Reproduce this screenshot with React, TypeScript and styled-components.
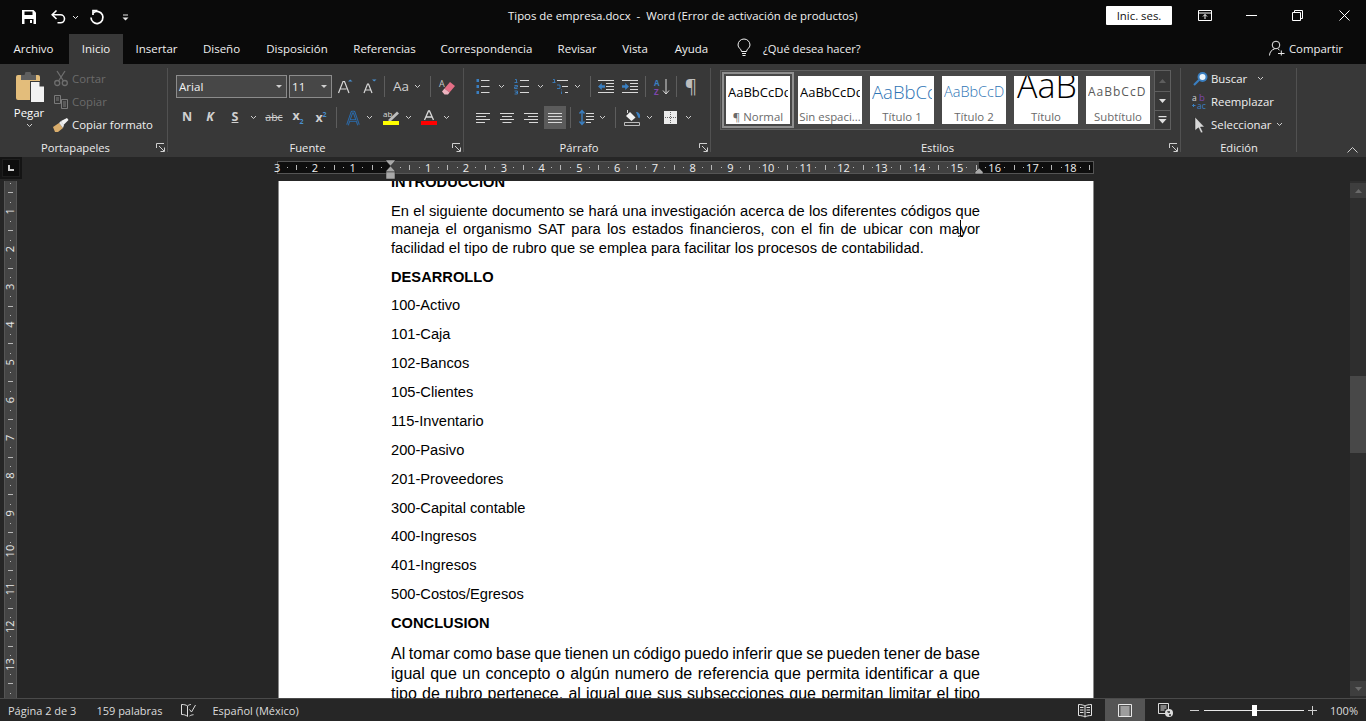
import React from 'react';
import styled, { createGlobalStyle } from 'styled-components';

const UI_FONT = '"Open Sans", "Noto Sans", sans-serif';

const GlobalStyle = createGlobalStyle`
    html, body {
        margin: 0;
        padding: 0;
        height: 721px;
        overflow: hidden;
        background: #262626;
    }
    svg {
        display: block;
        overflow: visible;
    }
`;

const Window = styled.div`
    width: 1366px;
    height: 721px;
    display: flex;
    flex-direction: column;
    font-family: ${ UI_FONT };
    font-size: 11.5px;
    color: #fff;
    overflow: hidden;
`;

/* ---------- title bar ---------- */

const TitleBar = styled.div`
    height: 34px;
    flex: none;
    display: flex;
    align-items: center;
    background: #0a0a0a;
    position: relative;
`;

const Qat = styled.div`
    display: flex;
    align-items: center;
    padding-left: 22px;
`;

const Title = styled.div`
    position: absolute;
    left: 508px;
    top: 7px;
    font-size: 11.4px;
    line-height: 18px;
    white-space: pre;
    color: #f2f2f2;
`;

const SignIn = styled.div`
    margin-left: auto;
    width: 66px;
    height: 19px;
    margin-top: -3px;
    background: #fff;
    border-radius: 1px;
    color: #111;
    display: flex;
    align-items: center;
    justify-content: center;
    font-size: 11.4px;
`;

const WinControls = styled.div`
    display: flex;
    align-items: center;
    margin-top: -3px;
    width: 194px;
`;

/* ---------- tabs ---------- */

const TabBar = styled.div`
    height: 30px;
    flex: none;
    display: flex;
    align-items: stretch;
    background: #0a0a0a;
`;

const Tab = styled.div<{ $w: number; $active?: boolean; $ml?: number }>`
    width: ${ p => p.$w }px;
    margin-left: ${ p => p.$ml || 0 }px;
    padding-bottom: 2px;
    box-sizing: border-box;
    display: flex;
    align-items: center;
    justify-content: center;
    font-size: 11.5px;
    color: #f0f0f0;
    background: ${ p => p.$active ? '#383838' : 'transparent' };
    white-space: nowrap;
`;

const TellMe = styled.div`
    display: flex;
    align-items: center;
    gap: 12px;
    margin-left: 15px;
    padding-bottom: 2px;
    font-size: 11.2px;
    color: #f0f0f0;
`;

const Share = styled.div`
    margin-left: auto;
    margin-right: 23px;
    padding-bottom: 2px;
    display: flex;
    align-items: center;
    gap: 4px;
    font-size: 11.4px;
    color: #f0f0f0;
`;

/* ---------- ribbon ---------- */

const Ribbon = styled.div`
    height: 93px;
    flex: none;
    display: flex;
    background: #383838;
    padding-top: 4px;
    box-sizing: border-box;
`;

const Group = styled.div<{ $w: number }>`
    width: ${ p => p.$w }px;
    flex: none;
    box-sizing: border-box;
    height: 89px;
    display: flex;
    flex-direction: column;
    position: relative;

    &::after {
        content: '';
        position: absolute;
        right: 0;
        top: 0;
        width: 1px;
        height: 84px;
        background: #515151;
    }
`;

const GroupBody = styled.div`
    flex: 1;
    min-height: 0;
`;

const GroupLabel = styled.div<{ $launcher?: boolean }>`
    height: 19px;
    flex: none;
    display: flex;
    align-items: center;
    justify-content: center;
    box-sizing: border-box;
    padding-right: ${ p => p.$launcher ? 17 : 0 }px;
    font-size: 11.2px;
    color: #ececec;
`;

const Launcher = styled.div`
    position: absolute;
    right: 3px;
    bottom: 5px;
`;

const ClipboardBody = styled.div`
    display: flex;
    height: 100%;
`;

const PasteBtn = styled.div`
    width: 50px;
    flex: none;
    padding: 4px 0 0 8px;
    box-sizing: border-box;
    display: flex;
    flex-direction: column;
    align-items: center;
    font-size: 11.4px;
`;

const PasteIconWrap = styled.div`
    margin-left: 3px;
`;

const PasteLabel = styled.div`
    margin-top: 1px;
    line-height: 17px;
    margin-bottom: 2px;
`;

const SideColumn = styled.div<{ $pl: number }>`
    display: flex;
    flex-direction: column;
    margin-top: -1px;
    padding-left: ${ p => p.$pl }px;
`;

const SideItem = styled.div<{ $disabled?: boolean }>`
    height: 23px;
    flex: none;
    display: flex;
    align-items: center;
    gap: 4px;
    white-space: nowrap;
    font-size: 11.4px;
    color: ${ p => p.$disabled ? '#6b6b6b' : '#efefef' };
`;

const SideIcon = styled.div`
    width: 14px;
    display: flex;
    justify-content: center;
`;

const Rows = styled.div`
    display: flex;
    flex-direction: column;
    padding: 7px 0 0 8px;
    gap: 8px;
`;

const Row = styled.div`
    display: flex;
    align-items: center;
    height: 23px;
`;

const Cell = styled.div<{ $w: number; $ml?: number; $active?: boolean }>`
    width: ${ p => p.$w }px;
    height: 23px;
    flex: none;
    margin-left: ${ p => p.$ml || 0 }px;
    display: flex;
    align-items: center;
    justify-content: center;
    background: ${ p => p.$active ? '#5b5b5b' : 'transparent' };
`;

const Sep = styled.div<{ $ml?: number }>`
    width: 1px;
    height: 21px;
    flex: none;
    margin-left: ${ p => p.$ml || 0 }px;
    background: #5d5d5d;
`;

const FontBox = styled.div<{ $w: number; $ml?: number }>`
    width: ${ p => p.$w }px;
    height: 23px;
    margin-left: ${ p => p.$ml || 0 }px;
    flex: none;
    box-sizing: border-box;
    border: 1px solid #8c8c8c;
    background: #474747;
    display: flex;
    align-items: center;
    justify-content: space-between;
    padding: 0 4px 0 2px;
    font-size: 11.6px;
    color: #f2f2f2;
`;

const GlyphText = styled.span<{ $size: number; $bold?: boolean; $italic?: boolean; $color?: string; $under?: boolean; $strike?: boolean }>`
    font-size: ${ p => p.$size }px;
    font-weight: ${ p => p.$bold ? 700 : 400 };
    font-style: ${ p => p.$italic ? 'italic' : 'normal' };
    color: ${ p => p.$color || '#d0d0d0' };
    text-decoration: ${ p => p.$under ? 'underline' : p.$strike ? 'line-through' : 'none' };
    line-height: 1;
`;

const Sub = styled.sub`
    font-size: 7px;
    color: #4a90d0;
`;

const Sup = styled.sup`
    font-size: 7px;
    color: #4a90d0;
`;

/* ---------- style gallery ---------- */

const Gallery = styled.div`
    margin: 2px 0 0 9px;
    width: 451px;
    height: 60px;
    box-sizing: border-box;
    border: 1px solid #5f5f5f;
    background: #484848;
    display: flex;
`;

const Cards = styled.div`
    flex: 1;
    display: flex;
    gap: 8px;
    padding: 5px 0 0 5px;
`;

const Card = styled.div<{ $selected?: boolean }>`
    width: 64px;
    height: 48px;
    background: #fff;
    flex: none;
    display: flex;
    flex-direction: column;
    outline: ${ p => p.$selected ? '2px solid #8f8f8f' : 'none' };
    outline-offset: 2px;
    overflow: hidden;
`;

const Preview = styled.div<{ $size: number; $color: string; $weight?: number; $spacing?: number; $lift?: number; $inset?: number }>`
    height: 33px;
    flex: none;
    margin: 0 2px;
    overflow: hidden;
    white-space: nowrap;
    font-family: "Open Sans", "Noto Sans", sans-serif;
    font-size: ${ p => p.$size }px;
    font-weight: ${ p => p.$weight || 400 };
    line-height: ${ p => 32 - (p.$lift || 0) * 2 }px;
    color: ${ p => p.$color };
    letter-spacing: ${ p => p.$spacing || 0 }px;
    text-indent: ${ p => p.$inset || 0 }px;
`;

const CardLabel = styled.div`
    text-align: center;
    color: #6a6a6a;
    font-size: 11.4px;
    line-height: 15px;
    white-space: nowrap;
    overflow: hidden;
`;

const GalleryScroll = styled.div`
    width: 15px;
    flex: none;
    border-left: 1px solid #5f5f5f;
    background: #383838;
    display: flex;
    flex-direction: column;
`;

const ScrollCell = styled.div<{ $h: number; $border?: boolean }>`
    height: ${ p => p.$h }px;
    display: flex;
    align-items: center;
    justify-content: center;
    box-sizing: border-box;
    border-bottom: ${ p => p.$border ? '1px solid #5f5f5f' : 'none' };
`;

const Collapse = styled.div`
    flex: 1;
    display: flex;
    align-items: flex-end;
    justify-content: flex-end;
    padding: 0 8px 4px 0;
`;

/* ---------- ruler row ---------- */

const RulerRow = styled.div`
    height: 24px;
    flex: none;
    display: flex;
    background: #262626;
`;

const TabStop = styled.div`
    width: 22px;
    height: 22px;
    background: #0d0d0d;
    box-shadow: inset 0 0 0 2px #141414, inset 0 0 0 3px #1e1e1e;
    display: flex;
    align-items: center;
    justify-content: center;
`;

const HRulerWrap = styled.div`
    margin-left: 255px;
`;

/* ---------- document area ---------- */

const Work = styled.div`
    flex: 1;
    min-height: 0;
    display: flex;
    background: #262626;
`;

const VRulerWrap = styled.div`
    width: 278px;
    flex: none;
    padding-left: 4px;
    box-sizing: border-box;
`;

const Page = styled.div`
    width: 816px;
    flex: none;
    box-sizing: border-box;
    background: #fff;
    border-left: 1px solid #8a8a8a;
    border-right: 1px solid #8a8a8a;
    padding-left: 112px;
    overflow: hidden;
    position: relative;
    font-family: "Liberation Sans", Arial, sans-serif;
    color: #000;
`;

const Heading = styled.div<{ $top?: number; $mb: number }>`
    font-size: 14.67px;
    font-weight: 700;
    line-height: 18px;
    margin-top: ${ p => p.$top || 0 }px;
    margin-bottom: ${ p => p.$mb }px;
`;

const Justified = styled.div<{ $size?: number; $lh?: number; $ws?: number }>`
    width: 589px;
    font-size: ${ p => p.$size || 14.67 }px;
    line-height: ${ p => p.$lh || 18.4 }px;
    word-spacing: ${ p => p.$ws || 0 }px;
    white-space: nowrap;
    text-align: justify;
    text-align-last: justify;
`;

const LastLine = styled.div`
    font-size: 14.67px;
    line-height: 18.5px;
    margin-bottom: 10.2px;
`;

const AccountItem = styled.div`
    font-size: 14.67px;
    line-height: 18px;
    margin-bottom: 10.9px;
`;

const IBeam = styled.div`
    position: absolute;
    left: 678px;
    top: 39px;
`;

const Scrollbar = styled.div`
    width: 16px;
    margin-left: auto;
    flex: none;
    background: #2e2e2e;
    display: flex;
    flex-direction: column;
    padding-top: 2px;
    box-sizing: border-box;
`;

const ScrollBtn = styled.div<{ $mt?: number }>`
    height: 15px;
    margin-top: ${ p => p.$mt || 0 }px;
    background: #3e3e3e;
    display: flex;
    align-items: center;
    justify-content: center;
    flex: none;
`;

const Thumb = styled.div`
    height: 77px;
    margin-top: 178px;
    background: #484848;
    flex: none;
`;

/* ---------- status bar ---------- */

const StatusBar = styled.div`
    height: 23px;
    flex: none;
    box-sizing: border-box;
    border-top: 1px solid #4a4a4a;
    background: #262626;
    display: flex;
    align-items: center;
    color: #dcdcdc;
    font-size: 11px;
`;

const StatusText = styled.div<{ $ml: number; $mr?: number }>`
    margin-left: ${ p => p.$ml }px;
    margin-right: ${ p => p.$mr || 0 }px;
    white-space: nowrap;
`;

const StatusIcon = styled.div<{ $ml?: number; $w?: number; $active?: boolean }>`
    margin-left: ${ p => p.$ml || 0 }px;
    width: ${ p => p.$w || 16 }px;
    height: 22px;
    display: flex;
    align-items: center;
    justify-content: center;
    background: ${ p => p.$active ? '#555' : 'transparent' };
`;

const StatusLeft = styled.div`
    display: flex;
    align-items: center;
`;

const StatusRight = styled.div`
    margin-left: auto;
    display: flex;
    align-items: center;
`;

const Slider = styled.div`
    width: 100px;
    height: 1px;
    margin-left: 5px;
    background: #e8e8e8;
    position: relative;
`;

const SliderThumb = styled.div`
    position: absolute;
    left: 48px;
    top: -5px;
    width: 5px;
    height: 11px;
    background: #fff;
`;

/* ---------- icons ---------- */

const Chevron = ({ color = '#cfcfcf' }: { color?: string }) => (
    <svg width="7" height="5" viewBox="0 0 7 5"><path d="M1 1l2.5 2.5L6 1" fill="none" stroke={ color } strokeWidth="1" /></svg>
);

const SaveIcon = () => (
    <svg width="14" height="14" viewBox="0 0 14 14">
        <path d="M0 0h11.500L14 2.500V14H0z" fill="#fff" />
        <path d="M2.500 1.500h8v3.500h-8zM2.500 9h9v5h-9z" fill="#0a0a0a" />
        <path d="M8 10h2v3H8z" fill="#fff" />
    </svg>
);

const UndoIcon = () => (
    <svg width="15" height="14" viewBox="0 0 15 14" fill="none" stroke="#fff" strokeWidth="1.600">
        <path d="M5.500 .5L1.200 4.800 5.500 9" />
        <path d="M1.800 4.800h7.700a3.900 3.900 0 0 1 0 8H6.500" />
    </svg>
);

const RedoIcon = () => (
    <svg width="14" height="14" viewBox="0 0 14 14" fill="none" stroke="#fff" strokeWidth="1.700">
        <path d="M3.300 2.800A6 6 0 1 1 1 7.500" />
        <path d="M7.500 .5H3v4.500" />
    </svg>
);

const CustomizeIcon = () => (
    <svg width="7" height="7" viewBox="0 0 7 7"><path d="M1 .5h5V1.500H1zM.5 3.500h6L3.500 6.500z" fill="#e6e6e6" /></svg>
);

const RibbonModeIcon = () => (
    <svg width="14" height="11" viewBox="0 0 14 11" fill="none" stroke="#fff">
        <path d="M.5 .5h13v10H.5zM.5 3h13" />
        <path d="M7 9V4.500M5 6.500l2-2 2 2" />
    </svg>
);

const MinIcon = () => (
    <svg width="11" height="1" viewBox="0 0 11 1"><path d="M0 .5h11" stroke="#fff" /></svg>
);

const RestoreIcon = () => (
    <svg width="11" height="11" viewBox="0 0 11 11" fill="none" stroke="#fff">
        <path d="M.5 2.500h8v8h-8zM2.500 2.500v-2h8v8h-2" />
    </svg>
);

const CloseIcon = () => (
    <svg width="11" height="11" viewBox="0 0 11 11"><path d="M.5 .5l10 10M10.500 .5l-10 10" stroke="#fff" /></svg>
);

const BulbIcon = () => (
    <svg width="14" height="18" viewBox="0 0 14 18" fill="none" stroke="#f0f0f0">
        <path d="M4.500 12.500C4.500 10 1 9 1 6a6 6 0 0 1 12 0c0 3-3.500 4-3.500 6.500z" />
        <path d="M5 14.500h4M5.500 16.500h3" />
    </svg>
);

const PersonIcon = () => (
    <svg width="16" height="16" viewBox="0 0 16 16" fill="none" stroke="#e8e8e8">
        <circle cx="7" cy="5" r="3.800" />
        <path d="M.5 15.500c0-3.500 2.500-6 5-6.500M9 9.300c.6.2 1 .4 1.500.8M9 13.500h6.500M12.300 10.500v5" />
    </svg>
);

const LauncherIcon = () => (
    <svg width="9" height="9" viewBox="0 0 9 9" fill="none" stroke="#cfcfcf">
        <path d="M.5 5V.5H8M3 3l5 5M8.500 4.500v4H4.500" />
    </svg>
);

const PasteIcon = () => (
    <svg width="29" height="31" viewBox="0 0 29 31">
        <path d="M2 3h20a2 2 0 0 1 2 2v21a2 2 0 0 1-2 2H2a2 2 0 0 1-2-2V5a2 2 0 0 1 2-2z" fill="#e3bd7b" />
        <path d="M5 3h3.500l1-3h5l1 3H20v5H5z" fill="#5f5f5f" />
        <path d="M14 9h10l5 5v17H14z" fill="#383838" />
        <path d="M15 10h8.500v4.500H28V30H15z" fill="#f2f2f2" />
    </svg>
);

const ScissorsIcon = () => (
    <svg width="14" height="15" viewBox="0 0 14 15" fill="none" stroke="#6e6e6e" strokeWidth="1.300">
        <path d="M3 0l6.500 10M11 0L4.500 10" />
        <circle cx="3.200" cy="12" r="2.500" />
        <circle cx="10.800" cy="12" r="2.500" />
    </svg>
);

const CopyIcon = () => (
    <svg width="14" height="14" viewBox="0 0 14 14" fill="none" stroke="#7a7a7a">
        <path d="M.5 .5h6v8h-6zM7.500 4.500h6v9h-6zM2 3h3M2 5h3M9 7h3M9 9h3M9 11h3" />
    </svg>
);

const BrushIcon = () => (
    <svg width="16" height="14" viewBox="0 0 16 14">
        <path d="M0 9l6-4 4 5-5 4H2z" fill="#d9ad6c" />
        <path d="M6 5l2-2 3 4-1 3z" fill="#e8e8e8" />
        <path d="M8 3l6-3 1.500 2-5 5z" fill="#f2f2f2" />
    </svg>
);

const GrowIcon = ({ up }: { up?: boolean }) => (
    <svg width="16" height="15" viewBox="0 0 16 15">
        <path d={ up ? 'M.5 14L5 2.500h1.500L11 14M2.500 10h6' : 'M2 14L5.500 5h1L10 14M3.500 11h5' } fill="none" stroke="#d8d8d8" strokeWidth="1.200" />
        <path d={ up ? 'M10 2.500L12.200 .5l2.300 2z' : 'M10 .5h4.500L12.200 2.500z' } fill="#4a90d0" />
    </svg>
);

const EraserIcon = () => (
    <svg width="16" height="16" viewBox="0 0 16 16">
        <text x="0" y="8" fontSize="9" fill="#c8c8c8" fontFamily="Open Sans">A</text>
        <path d="M11 3l5 4-5.500 6.500-5-4z" fill="#e56f86" />
        <path d="M5.500 9.500l5 4-1.500 2H5.500l-2.500-3z" fill="#eeb3bf" />
    </svg>
);

const OutlineA = () => (
    <svg width="14" height="16" viewBox="0 0 14 16" fill="none" strokeLinejoin="round">
        <path d="M1.500 15L6 2h2l4.500 13M3.500 10.500h7" stroke="#2a6db0" strokeWidth="2.600" />
        <path d="M1.500 15L6 2h2l4.500 13M3.500 10.500h7" stroke="#383838" strokeWidth=".8" />
    </svg>
);

const HighlightIcon = () => (
    <svg width="16" height="15" viewBox="0 0 16 15">
        <text x="0" y="6.500" fontSize="8" fill="#d8d8d8" fontFamily="Open Sans">ab</text>
        <path d="M5.500 9.500L14 1.500l2 2-8 7.500H5.500z" fill="#bdbdbd" />
        <path d="M0 11h16v4H0z" fill="#ffff00" />
    </svg>
);

const FontColorIcon = () => (
    <svg width="16" height="15" viewBox="0 0 16 15">
        <path d="M3.500 10L7.500 1h1l4 9M5 7h6" fill="none" stroke="#d8d8d8" strokeWidth="1.300" />
        <path d="M0 11h16v4H0z" fill="#ff0000" />
    </svg>
);

const LINE = '#d8d8d8';
const BLUE = '#3a7fc1';

const BulletsIcon = () => (
    <svg width="14" height="15" viewBox="0 0 14 15">
        <path d="M5 1.500h8.500M5 7.500h8.500M5 13.500h8.500" stroke={ LINE } />
        <path d="M.5 0h2.500v3H.5zM.5 6h2.500v3H.5zM.5 12h2.500v3H.5z" fill={ BLUE } />
    </svg>
);

const NumberingIcon = () => (
    <svg width="15" height="15" viewBox="0 0 15 15">
        <path d="M6 1.500h9M6 7.500h9M6 13.500h9" stroke={ LINE } />
        <path d="M1 .5h1.500v3M.5 3.500h3M.5 6.500h3V8h-3v1.500h3M.5 12h3v3h-3M1.500 13.500h2" fill="none" stroke={ BLUE } strokeWidth=".9" />
    </svg>
);

const MultilevelIcon = () => (
    <svg width="18" height="15" viewBox="0 0 18 15">
        <path d="M5 1.500h11M10 7.500h6M13 13.500h3" stroke={ LINE } />
        <path d="M1 .5h1.500v3M.5 3.500h3M5 6h3v3.500H5M9.500 10.500v.8M9.500 12.500v2.500" fill="none" stroke={ BLUE } strokeWidth=".9" />
    </svg>
);

const IndentIcon = ({ out }: { out?: boolean }) => (
    <svg width="16" height="13" viewBox="0 0 16 13">
        <path d="M0 .5h16M8 3.500h8M8 6.500h8M8 9.500h8M0 12.500h16" stroke={ LINE } />
        <path d={ out ? 'M0 6.500L3.800 3v2.200H7v2.600H3.800V10z' : 'M7 6.500L3.200 3v2.200H0v2.600h3.200V10z' } fill={ BLUE } />
    </svg>
);

const SortIcon = () => (
    <svg width="16" height="16" viewBox="0 0 16 16">
        <text x="0" y="7" fontSize="8" fontWeight="700" fill={ BLUE } fontFamily="Open Sans">A</text>
        <text x="0" y="15.500" fontSize="8" fontWeight="700" fill="#7f47ad" fontFamily="Open Sans">Z</text>
        <path d="M12 0v15M9 11.500l3 3.500 3-3.500" fill="none" stroke={ LINE } />
    </svg>
);

const AlignIcon = ({ kind }: { kind: 'l' | 'c' | 'r' | 'j' }) => {
    const paths = {
        l: 'M0 .5h14M0 3.500h10M0 6.500h14M0 9.500h9',
        c: 'M0 .5h14M2 3.500h10M0 6.500h14M2.500 9.500h9',
        r: 'M0 .5h14M4 3.500h10M0 6.500h14M5 9.500h9',
        j: 'M0 .5h14M0 3.500h14M0 6.500h14M0 9.500h14',
    };
    return <svg width="14" height="10" viewBox="0 0 14 10"><path d={ paths[kind] } stroke={ LINE } /></svg>;
};

const LineSpacingIcon = () => (
    <svg width="15" height="17" viewBox="0 0 15 17">
        <path d="M7 4.500h8M7 7.500h8M7 10.500h8M7 13.500h5" stroke={ LINE } />
        <path d="M3 2v13M.5 4.500L3 1.500l2.500 3M.5 12.500L3 15.500l2.500-3" fill="none" stroke={ BLUE } strokeWidth="1.400" />
    </svg>
);

const ShadingIcon = () => (
    <svg width="17" height="16" viewBox="0 0 17 16">
        <path d="M3.500 0v3" stroke={ LINE } />
        <path d="M2 6l4-4 5.500 5.500-4 3.500z" fill="#f0f0f0" />
        <path d="M12 2c2.500 0 4.500 2 4 5-.5 2-1.500 1-2 0z" fill={ BLUE } />
        <path d="M.5 12.500h15v3H.5z" fill="none" stroke="#bdbdbd" />
    </svg>
);

const BordersIcon = () => (
    <svg width="13" height="13" viewBox="0 0 13 13">
        <path d="M0 0h13v13H0z" fill="#ececec" />
        <path d="M1 6.500h11M6.500 1v11" stroke="#666" strokeDasharray="1 1" />
    </svg>
);

const SearchIcon = () => (
    <svg width="15" height="14" viewBox="0 0 15 14">
        <path d="M1 13l5-5" stroke="#3a7fc1" strokeWidth="2.200" />
        <circle cx="9.500" cy="5" r="5" fill="#3a7fc1" />
        <circle cx="9.500" cy="5" r="3" fill="#eef5fb" />
    </svg>
);

const ReplaceIcon = () => (
    <svg width="16" height="16" viewBox="0 0 16 16">
        <text x="0" y="7" fontSize="8.500" fill="#d8d8d8" fontFamily="Open Sans">a</text>
        <text x="7" y="7" fontSize="9.500" fill="#7f47ad" fontFamily="Open Sans">b</text>
        <text x="5" y="15" fontSize="8.500" fill="#3a7fc1" fontFamily="Open Sans">ac</text>
        <path d="M.5 11.500h3M2 10l-1.500 1.500L2 13" fill="none" stroke="#3a7fc1" />
    </svg>
);

const CursorIcon = () => (
    <svg width="10" height="16" viewBox="0 0 10 16">
        <path d="M0 0l9.500 10H5.500l2.500 5.200-2 .8L3.500 10.800 0 13.500z" fill="#d8d8d8" stroke="#222" strokeWidth=".5" />
    </svg>
);

const TriangleIcon = ({ down, color = '#e0e0e0', w = 7 }: { down?: boolean; color?: string; w?: number }) => (
    <svg width={ w } height={ Math.ceil(w / 2) } viewBox={ `0 0 ${ w } ${ Math.ceil(w / 2) }` }>
        <path d={ down ? `M0 0h${ w }L${ w / 2 } ${ Math.ceil(w / 2) }z` : `M0 ${ Math.ceil(w / 2) }h${ w }L${ w / 2 } 0z` } fill={ color } />
    </svg>
);

const MoreIcon = () => (
    <svg width="9" height="8" viewBox="0 0 9 8"><path d="M.5 0h8v1.200h-8zM.5 3h8L4.500 7.500z" fill="#e0e0e0" /></svg>
);

const CollapseIcon = () => (
    <svg width="11" height="6" viewBox="0 0 11 6"><path d="M.5 5.500l5-5 5 5" fill="none" stroke="#cfcfcf" /></svg>
);

const ProofIcon = () => (
    <svg width="15" height="13" viewBox="0 0 15 13" fill="none" stroke="#dcdcdc">
        <path d="M6.500 2C5 .8 3 .5.500 .5v10c2.500 0 4.500.5 6 2V2zM6.500 2C7.500 1 9 .5 10 .5M8.500 12c1.200-.8 2-1 4-1.300" />
        <path d="M8.500 5.500l2 2.500 4-7" />
    </svg>
);

const ReadIcon = () => (
    <svg width="14" height="13" viewBox="0 0 14 13" fill="none" stroke="#e4e4e4">
        <path d="M7 2C5.500 1 3 .5.500 .5v11c2.500 0 5 .5 6.500 1.500 1.500-1 4-1.500 6.500-1.500V.5C11 .5 8.500 1 7 2zM7 2v11" />
        <path d="M2 3.500h3.500M2 6h3.500M2 8.500h3.500M8.500 3.500H12M8.500 6H12M8.500 8.500H12" />
    </svg>
);

const PrintIcon = () => (
    <svg width="14" height="13" viewBox="0 0 14 13" fill="none" stroke="#e8e8e8">
        <path d="M.5 .5h13v12H.5zM2.500 3h9M2.500 5h9M2.500 7h9M2.500 9h9M2.500 11h9" />
    </svg>
);

const WebIcon = () => (
    <svg width="15" height="14" viewBox="0 0 15 14">
        <path d="M.5 .5h10v10H.5zM2.500 3h6M2.500 5h6M2.500 7h4" fill="none" stroke="#dcdcdc" />
        <circle cx="11" cy="10" r="4" fill="#dcdcdc" />
        <path d="M9 8h3v2h-2zM11 11h2v2h-2z" fill="#555" />
    </svg>
);

const ZoomMinus = () => (
    <svg width="9" height="1" viewBox="0 0 9 1"><path d="M0 .5h9" stroke="#cfcfcf" /></svg>
);

const ZoomPlus = () => (
    <svg width="9" height="9" viewBox="0 0 9 9"><path d="M0 4.500h9M4.500 0v9" stroke="#cfcfcf" /></svg>
);

const TabStopIcon = () => (
    <svg width="6" height="6" viewBox="0 0 6 6"><path d="M0 0h2v4h4v2H0z" fill="#cfcfcf" /></svg>
);

/* ---------- rulers ---------- */

const CM = 37.76;
const H_ORIGIN = 113.5;

const HRuler = () => {
    const marks: React.ReactNode[] = [];
    for (let i = -3; i <= 18; i++) {
        const x = H_ORIGIN + i * CM;
        if (i !== 0) {
            marks.push(<text key={ `n${ i }` } x={ x } y={ 14.500 } textAnchor="middle" fontSize="11" fontFamily={ UI_FONT } fill="#f0f0f0">{ Math.abs(i) }</text>);
        }
        for (let q = 1; q <= 3; q++) {
            const tx = Math.round(x + (q * CM) / 4) + 0.5;
            if (tx > 816) continue;
            const half = q === 2;
            marks.push(<path key={ `t${ i }-${ q }` } d={ half ? `M${ tx } 8v5` : `M${ tx } 10v1` } stroke="#b8b8b8" />);
        }
    }
    return (
        <svg width="820" height="24" viewBox="0 0 820 24">
            <rect x="0.500" y="4.500" width="816" height="12" fill="#0e0e0e" stroke="#555" />
            <rect x="113" y="5" width="589" height="11" fill="#414141" />
            { marks }
            <path d="M109 3h9v1l-4.500 5L109 4zM109 14l4.500-5 4.500 5v1h-9z" fill="#a8a8a8" stroke="#222" strokeWidth=".5" />
            <path d="M109 15h9v7h-9z" fill="#a8a8a8" stroke="#222" strokeWidth=".5" />
            <path d="M702 11l4 4v2h-8v-2z" fill="#a8a8a8" stroke="#222" strokeWidth=".5" />
        </svg>
    );
};

const V_ORIGIN = -7.5;

const VRuler = () => {
    const marks: React.ReactNode[] = [];
    for (let i = 0; i <= 13; i++) {
        const y = V_ORIGIN + i * CM;
        if (i > 0) {
            marks.push(
                <text key={ `n${ i }` } transform={ `translate(10 ${ y }) rotate(-90)` } textAnchor="middle" fontSize="11" fontFamily={ UI_FONT } fill="#e8e8e8">{ i }</text>,
            );
        }
        for (let q = 1; q <= 3; q++) {
            const ty = Math.round(y + (q * CM) / 4) + 0.5;
            const half = q === 2;
            marks.push(<path key={ `t${ i }-${ q }` } d={ half ? `M4 ${ ty }h5` : `M6 ${ ty }h1` } stroke="#b8b8b8" />);
        }
    }
    return (
        <svg width="13" height="517" viewBox="0 0 13 517">
            <path d="M.5 0v517M12.500 0v517" stroke="#555" />
            <rect x="1" y="0" width="11" height="517" fill="#444" />
            { marks }
        </svg>
    );
};

const Launch = () => <Launcher><LauncherIcon /></Launcher>;

const accounts = [
    '100-Activo', '101-Caja', '102-Bancos', '105-Clientes', '115-Inventario', '200-Pasivo',
    '201-Proveedores', '300-Capital contable', '400-Ingresos', '401-Ingresos', '500-Costos/Egresos',
];

const App = () => (
    <Window>
        <GlobalStyle />
        <TitleBar>
            <Qat>
                <Cell $w={ 14 }><SaveIcon /></Cell>
                <Cell $w={ 15 } $ml={ 15 }><UndoIcon /></Cell>
                <Cell $w={ 7 } $ml={ 6 }><Chevron color="#e6e6e6" /></Cell>
                <Cell $w={ 14 } $ml={ 11 }><RedoIcon /></Cell>
                <Cell $w={ 7 } $ml={ 18 }><CustomizeIcon /></Cell>
            </Qat>
            <Title>Tipos de empresa.docx  -  Word (Error de activación de productos)</Title>
            <SignIn>Inic. ses.</SignIn>
            <WinControls>
                <Cell $w={ 14 } $ml={ 26 }><RibbonModeIcon /></Cell>
                <Cell $w={ 11 } $ml={ 34 }><MinIcon /></Cell>
                <Cell $w={ 11 } $ml={ 35 }><RestoreIcon /></Cell>
                <Cell $w={ 11 } $ml={ 36 }><CloseIcon /></Cell>
            </WinControls>
        </TitleBar>

        <TabBar>
            <Tab $w={ 67 }>Archivo</Tab>
            <Tab $w={ 54 } $ml={ 2 } $active>Inicio</Tab>
            <Tab $w={ 67 }>Insertar</Tab>
            <Tab $w={ 63 }>Diseño</Tab>
            <Tab $w={ 88 }>Disposición</Tab>
            <Tab $w={ 87 }>Referencias</Tab>
            <Tab $w={ 117 }>Correspondencia</Tab>
            <Tab $w={ 64 }>Revisar</Tab>
            <Tab $w={ 52 }>Vista</Tab>
            <Tab $w={ 61 }>Ayuda</Tab>
            <TellMe><BulbIcon />¿Qué desea hacer?</TellMe>
            <Share><PersonIcon />Compartir</Share>
        </TabBar>

        <Ribbon>
            <Group $w={ 168 }>
                <GroupBody>
                    <ClipboardBody>
                        <PasteBtn>
                            <PasteIconWrap><PasteIcon /></PasteIconWrap>
                            <PasteLabel>Pegar</PasteLabel>
                            <Chevron />
                        </PasteBtn>
                        <SideColumn $pl={ 4 }>
                            <SideItem $disabled><SideIcon><ScissorsIcon /></SideIcon>Cortar</SideItem>
                            <SideItem $disabled><SideIcon><CopyIcon /></SideIcon>Copiar</SideItem>
                            <SideItem><SideIcon><BrushIcon /></SideIcon>Copiar formato</SideItem>
                        </SideColumn>
                    </ClipboardBody>
                </GroupBody>
                <GroupLabel $launcher>Portapapeles</GroupLabel>
                <Launch />
            </Group>

            <Group $w={ 296 }>
                <GroupBody>
                    <Rows>
                        <Row>
                            <FontBox $w={ 111 }>Arial<TriangleIcon down w={ 6 } color="#d0d0d0" /></FontBox>
                            <FontBox $w={ 43 } $ml={ 2 }>11<TriangleIcon down w={ 6 } color="#d0d0d0" /></FontBox>
                            <Cell $w={ 24 } $ml={ 2 }><GrowIcon up /></Cell>
                            <Cell $w={ 24 }><GrowIcon /></Cell>
                            <Sep $ml={ 2 } />
                            <Cell $w={ 22 } $ml={ 5 }><GlyphText $size={ 13.500 }>Aa</GlyphText></Cell>
                            <Cell $w={ 10 }><Chevron /></Cell>
                            <Sep $ml={ 8 } />
                            <Cell $w={ 16 } $ml={ 8 }><EraserIcon /></Cell>
                        </Row>
                        <Row>
                            <Cell $w={ 22 }><GlyphText $size={ 12.500 } $bold>N</GlyphText></Cell>
                            <Cell $w={ 24 }><GlyphText $size={ 12.500 } $bold $italic>K</GlyphText></Cell>
                            <Cell $w={ 26 }><GlyphText $size={ 12.500 } $bold $under>S</GlyphText></Cell>
                            <Cell $w={ 10 }><Chevron /></Cell>
                            <Cell $w={ 32 }><GlyphText $size={ 10.500 } $strike>abc</GlyphText></Cell>
                            <Cell $w={ 16 }><GlyphText $size={ 12.500 } $bold>x<Sub>2</Sub></GlyphText></Cell>
                            <Cell $w={ 30 }><GlyphText $size={ 12.500 } $bold>x<Sup>2</Sup></GlyphText></Cell>
                            <Sep />
                            <Cell $w={ 22 } $ml={ 5 }><OutlineA /></Cell>
                            <Cell $w={ 10 }><Chevron /></Cell>
                            <Cell $w={ 24 } $ml={ 5 }><HighlightIcon /></Cell>
                            <Cell $w={ 10 }><Chevron /></Cell>
                            <Cell $w={ 24 } $ml={ 4 }><FontColorIcon /></Cell>
                            <Cell $w={ 10 }><Chevron /></Cell>
                        </Row>
                    </Rows>
                </GroupBody>
                <GroupLabel $launcher>Fuente</GroupLabel>
                <Launch />
            </Group>

            <Group $w={ 247 }>
                <GroupBody>
                    <Rows>
                        <Row>
                            <Cell $w={ 17 } $ml={ 2 }><BulletsIcon /></Cell>
                            <Cell $w={ 10 } $ml={ 5 }><Chevron /></Cell>
                            <Cell $w={ 17 } $ml={ 7 }><NumberingIcon /></Cell>
                            <Cell $w={ 10 } $ml={ 5 }><Chevron /></Cell>
                            <Cell $w={ 20 } $ml={ 6 }><MultilevelIcon /></Cell>
                            <Cell $w={ 10 } $ml={ 1 }><Chevron /></Cell>
                            <Sep $ml={ 8 } />
                            <Cell $w={ 22 } $ml={ 4 }><IndentIcon out /></Cell>
                            <Cell $w={ 24 } $ml={ 1 }><IndentIcon /></Cell>
                            <Sep $ml={ 3 } />
                            <Cell $w={ 20 } $ml={ 6 }><SortIcon /></Cell>
                            <Sep $ml={ 4 } />
                            <Cell $w={ 28 }><GlyphText $size={ 19 } $color="#bdbdbd">¶</GlyphText></Cell>
                        </Row>
                        <Row>
                            <Cell $w={ 20 } $ml={ 1 }><AlignIcon kind="l" /></Cell>
                            <Cell $w={ 24 } $ml={ 2 }><AlignIcon kind="c" /></Cell>
                            <Cell $w={ 20 } $ml={ 2 }><AlignIcon kind="r" /></Cell>
                            <Cell $w={ 22 } $ml={ 3 } $active><AlignIcon kind="j" /></Cell>
                            <Sep $ml={ 4 } />
                            <Cell $w={ 20 } $ml={ 5 }><LineSpacingIcon /></Cell>
                            <Cell $w={ 10 } $ml={ 1 }><Chevron /></Cell>
                            <Sep $ml={ 8 } />
                            <Cell $w={ 24 } $ml={ 4 }><ShadingIcon /></Cell>
                            <Cell $w={ 10 }><Chevron /></Cell>
                            <Cell $w={ 20 } $ml={ 6 }><BordersIcon /></Cell>
                            <Cell $w={ 10 } $ml={ 3 }><Chevron /></Cell>
                        </Row>
                    </Rows>
                </GroupBody>
                <GroupLabel $launcher>Párrafo</GroupLabel>
                <Launch />
            </Group>

            <Group $w={ 470 }>
                <GroupBody>
                    <Gallery>
                        <Cards>
                            <Card $selected>
                                <Preview $size={ 13 } $color="#000">AaBbCcDd</Preview>
                                <CardLabel>¶ Normal</CardLabel>
                            </Card>
                            <Card>
                                <Preview $size={ 13 } $color="#000">AaBbCcDd</Preview>
                                <CardLabel>Sin espaci...</CardLabel>
                            </Card>
                            <Card>
                                <Preview $size={ 18.500 } $color="#2e74b5" $weight={ 300 }>AaBbCc</Preview>
                                <CardLabel>Título 1</CardLabel>
                            </Card>
                            <Card>
                                <Preview $size={ 14.500 } $color="#2e74b5" $weight={ 300 }>AaBbCcD</Preview>
                                <CardLabel>Título 2</CardLabel>
                            </Card>
                            <Card>
                                <Preview $size={ 34 } $color="#000" $weight={ 300 } $lift={ 7 } $inset={ 1 }>AaB</Preview>
                                <CardLabel>Título</CardLabel>
                            </Card>
                            <Card>
                                <Preview $size={ 12 } $color="#595959" $spacing={ 1 }>AaBbCcD</Preview>
                                <CardLabel>Subtítulo</CardLabel>
                            </Card>
                        </Cards>
                        <GalleryScroll>
                            <ScrollCell $h={ 21 } $border><TriangleIcon w={ 7 } color="#5e5e5e" /></ScrollCell>
                            <ScrollCell $h={ 19 } $border><TriangleIcon down w={ 7 } /></ScrollCell>
                            <ScrollCell $h={ 18 }><MoreIcon /></ScrollCell>
                        </GalleryScroll>
                    </Gallery>
                </GroupBody>
                <GroupLabel $launcher>Estilos</GroupLabel>
                <Launch />
            </Group>

            <Group $w={ 116 }>
                <GroupBody>
                    <SideColumn $pl={ 12 }>
                        <SideItem><SideIcon><SearchIcon /></SideIcon>Buscar<Cell $w={ 10 } $ml={ 4 }><Chevron /></Cell></SideItem>
                        <SideItem><SideIcon><ReplaceIcon /></SideIcon>Reemplazar</SideItem>
                        <SideItem><SideIcon><CursorIcon /></SideIcon>Seleccionar<Chevron /></SideItem>
                    </SideColumn>
                </GroupBody>
                <GroupLabel>Edición</GroupLabel>
            </Group>

            <Collapse><CollapseIcon /></Collapse>
        </Ribbon>

        <RulerRow>
            <TabStop><TabStopIcon /></TabStop>
            <HRulerWrap><HRuler /></HRulerWrap>
        </RulerRow>

        <Work>
            <VRulerWrap><VRuler /></VRulerWrap>
            <Page>
                <Heading $top={ -8 } $mb={ 11 }>INTRODUCCION</Heading>
                <Justified>En el siguiente documento se hará una investigación acerca de los diferentes códigos que</Justified>
                <Justified>maneja el organismo SAT para los estados financieros, con el fin de ubicar con mayor</Justified>
                <LastLine>facilidad el tipo de rubro que se emplea para facilitar los procesos de contabilidad.</LastLine>
                <Heading $mb={ 10.8 }>DESARROLLO</Heading>
                { accounts.map(item => <AccountItem key={ item }>{ item }</AccountItem>) }
                <Heading $mb={ 12.2 }>CONCLUSION</Heading>
                <Justified $size={ 16 } $lh={ 20 } $ws={ -1 }>Al tomar como base que tienen un código puedo inferir que se pueden tener de base</Justified>
                <Justified $size={ 16 } $lh={ 20 }>igual que un concepto o algún numero de referencia que permita identificar a que</Justified>
                <Justified $size={ 16 } $lh={ 20 }>tipo de rubro pertenece, al igual que sus subsecciones que permitan limitar el tipo</Justified>
                <IBeam>
                    <svg width="7" height="17" viewBox="0 0 7 17" fill="none" stroke="#000">
                        <path d="M3.500 0v16M1 16.500l2.500-1 2.500 1" />
                    </svg>
                </IBeam>
            </Page>
            <Scrollbar>
                <ScrollBtn><TriangleIcon w={ 7 } color="#6a6a6a" /></ScrollBtn>
                <Thumb />
                <ScrollBtn $mt={ 228 }><TriangleIcon down w={ 7 } color="#6a6a6a" /></ScrollBtn>
            </Scrollbar>
        </Work>

        <StatusBar>
            <StatusLeft>
                <StatusText $ml={ 8 }>Página 2 de 3</StatusText>
                <StatusText $ml={ 20 }>159 palabras</StatusText>
                <StatusIcon $ml={ 18 }><ProofIcon /></StatusIcon>
                <StatusText $ml={ 16 }>Español (México)</StatusText>
            </StatusLeft>
            <StatusRight>
                <StatusIcon $w={ 16 }><ReadIcon /></StatusIcon>
                <StatusIcon $ml={ 12 } $w={ 40 } $active><PrintIcon /></StatusIcon>
                <StatusIcon $ml={ 12 }><WebIcon /></StatusIcon>
                <StatusIcon $ml={ 17 } $w={ 9 }><ZoomMinus /></StatusIcon>
                <Slider><SliderThumb /></Slider>
                <StatusIcon $ml={ 4 } $w={ 9 }><ZoomPlus /></StatusIcon>
                <StatusText $ml={ 13 } $mr={ 8 }>100%</StatusText>
            </StatusRight>
        </StatusBar>
    </Window>
);

export default App;
